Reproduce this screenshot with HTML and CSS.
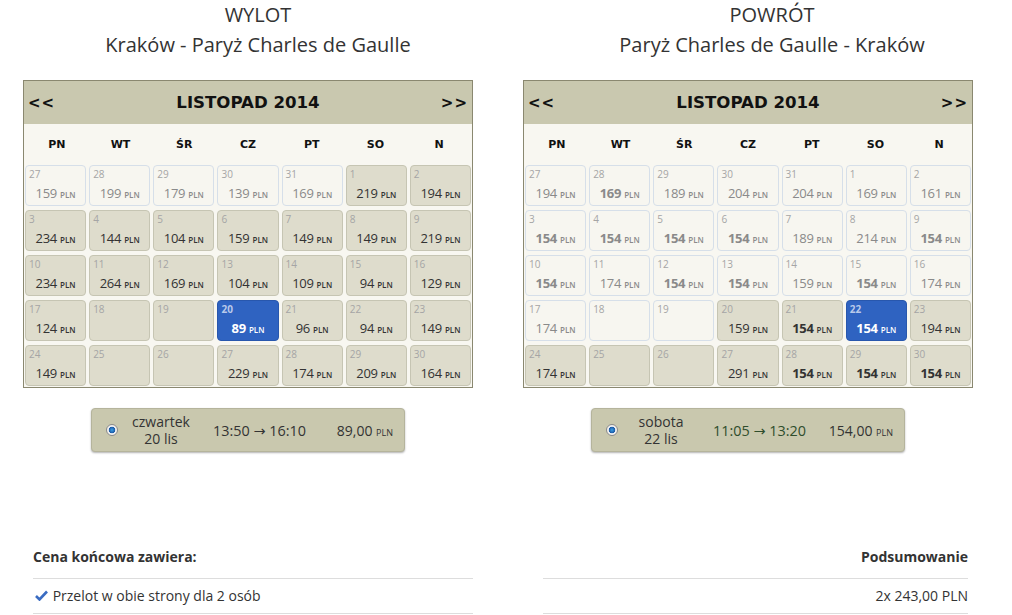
FILE: index.html
```html
<!DOCTYPE html>
<html>
<head>
    <title>Wybór lotu</title>
    <meta name="viewport" content="width=device-width, initial-scale=1.0">
    <link rel="stylesheet" href="styles.css">
</head>
<body>
    <div class="flights">
        <!-- Outbound -->
        <div class="leg leg-out">
            <div class="leg-title">
                WYLOT<br>
                Kraków - Paryż Charles de Gaulle
            </div>
            <div class="calendar">
                <div class="cal-head">
                    <span class="cal-nav">&lt;&lt;</span>
                    <span class="cal-month">LISTOPAD 2014</span>
                    <span class="cal-nav">&gt;&gt;</span>
                </div>
                <div class="cal-days">
                    <span>PN</span><span>WT</span><span>ŚR</span><span>CZ</span><span>PT</span><span>SO</span><span>N</span>
                </div>
                <div class="cal-grid" id="grid-out"></div>
            </div>
            <div class="choice">
                <span class="radio"></span>
                <span class="choice-day">czwartek<br>20 lis</span>
                <span class="choice-time">13:50 → 16:10</span>
                <span class="choice-price">89,00 <small>PLN</small></span>
            </div>
        </div>

        <!-- Return -->
        <div class="leg leg-back">
            <div class="leg-title">
                POWRÓT<br>
                Paryż Charles de Gaulle - Kraków
            </div>
            <div class="calendar">
                <div class="cal-head">
                    <span class="cal-nav">&lt;&lt;</span>
                    <span class="cal-month">LISTOPAD 2014</span>
                    <span class="cal-nav">&gt;&gt;</span>
                </div>
                <div class="cal-days">
                    <span>PN</span><span>WT</span><span>ŚR</span><span>CZ</span><span>PT</span><span>SO</span><span>N</span>
                </div>
                <div class="cal-grid" id="grid-back"></div>
            </div>
            <div class="choice">
                <span class="radio"></span>
                <span class="choice-day">sobota<br>22 lis</span>
                <span class="choice-time time-best">11:05 → 13:20</span>
                <span class="choice-price">154,00 <small>PLN</small></span>
            </div>
        </div>
    </div>

    <div class="summary">
        <div class="sum-col">
            <div class="sum-head">Cena końcowa zawiera:</div>
            <div class="sum-row">
                <svg class="check" width="13" height="11" viewBox="0 0 13 11"><path d="M1 6 L4.5 9.5 L12 1.5" fill="none" stroke="#3a6cc2" stroke-width="2.6"/></svg>
                Przelot w obie strony dla 2 osób
            </div>
        </div>
        <div class="sum-col sum-right">
            <div class="sum-head">Podsumowanie</div>
            <div class="sum-row">2x 243,00 PLN</div>
        </div>
    </div>

    <script>
        // [day, price, flags]  o = poza zakresem, b = najtańszy, s = wybrany
        const outbound = [
            [27,159,'o'],[28,199,'o'],[29,179,'o'],[30,139,'o'],[31,169,'o'],[1,219],[2,194],
            [3,234],[4,144],[5,104],[6,159],[7,149],[8,149],[9,219],
            [10,234],[11,264],[12,169],[13,104],[14,109],[15,94],[16,129],
            [17,124],[18],[19],[20,89,'s'],[21,96],[22,94],[23,149],
            [24,149],[25],[26],[27,229],[28,174],[29,209],[30,164]
        ];
        const inbound = [
            [27,194,'o'],[28,169,'ob'],[29,189,'o'],[30,204,'o'],[31,204,'o'],[1,169,'o'],[2,161,'o'],
            [3,154,'ob'],[4,154,'ob'],[5,154,'ob'],[6,154,'ob'],[7,189,'o'],[8,214,'o'],[9,154,'ob'],
            [10,154,'ob'],[11,174,'o'],[12,154,'ob'],[13,154,'ob'],[14,159,'o'],[15,154,'ob'],[16,174,'o'],
            [17,174,'o'],[18,null,'o'],[19,null,'o'],[20,159],[21,154,'b'],[22,154,'s'],[23,194],
            [24,174],[25],[26],[27,291],[28,154,'b'],[29,154,'b'],[30,154,'b']
        ];

        function fillGrid(id, days) {
            const grid = document.getElementById(id);
            days.forEach(([day, price, flags = '']) => {
                const cell = document.createElement('div');
                cell.className = 'cell';
                if (flags.includes('o')) cell.classList.add('off');
                if (flags.includes('b')) cell.classList.add('best');
                if (flags.includes('s')) cell.classList.add('selected');
                cell.innerHTML = '<span class="cell-day">' + day + '</span>' +
                    (price ? '<span class="cell-price">' + price + ' <small>PLN</small></span>' : '');
                grid.appendChild(cell);
            });
        }

        fillGrid('grid-out', outbound);
        fillGrid('grid-back', inbound);
    </script>
</body>
</html>
```

FILE: styles.css
```css
body {
    margin: 0;
    background: #fff;
    color: #333;
    font-family: 'Open Sans', 'DejaVu Sans', sans-serif;
}
.flights {
    display: flex;
    gap: 50px;
    padding-left: 23px;
}
.leg {
    width: 450px;
    display: flex;
    flex-direction: column;
    align-items: center;
}
.leg-title {
    font-size: 20px;
    line-height: 30px;
    text-align: center;
    padding-left: 20px;
    margin-bottom: 20px;
}
.leg-back .leg-title {
    padding-left: 48px;
}
/* Month calendar */
.calendar {
    width: 448px;
    border: 1px solid #8a8870;
    background: #f8f7f1;
}
.cal-head {
    height: 43px;
    background: #c9c8af;
    display: flex;
    align-items: center;
    justify-content: space-between;
    padding: 0 4px;
    font-family: 'DejaVu Sans', sans-serif;
    font-weight: bold;
    color: #111;
}
.cal-nav {
    font-size: 15px;
    letter-spacing: 1px;
}
.cal-month {
    font-size: 16.6px;
}
.cal-days {
    height: 40px;
    display: grid;
    grid-template-columns: repeat(7, 1fr);
    align-items: center;
    text-align: center;
    font-family: 'DejaVu Sans', sans-serif;
    font-weight: bold;
    font-size: 11px;
    color: #111;
    padding: 0 1px;
}
.cal-grid {
    display: grid;
    grid-template-columns: repeat(7, 1fr);
    grid-auto-rows: 41px;
    gap: 4px 3px;
    padding: 1px;
}
.cell {
    position: relative;
    border: 1px solid #c6c5b3;
    border-radius: 4px;
    background: #dedccc;
    color: #333;
}
.cell.off {
    background: #f7f6f0;
    border-color: #d6dfe9;
    color: #8a8a8a;
}
.cell-day {
    position: absolute;
    left: 3px;
    top: 1px;
    font-size: 10px;
    color: #a5a5a5;
}
.cell-price {
    position: absolute;
    left: 0;
    right: 0;
    top: 18px;
    text-align: center;
    font-size: 13px;
    letter-spacing: -0.3px;
}
.cell-price small {
    font-size: 8px;
    font-weight: 600;
    letter-spacing: 0;
}
.cell.best .cell-price {
    font-weight: bold;
}
.cell.selected {
    background: #2f63c1;
    border-color: #2857ad;
    color: #fff;
}
.cell.selected .cell-day {
    color: #b9c9ea;
    font-weight: bold;
}
.cell.selected .cell-price {
    font-weight: bold;
}
/* Chosen flight */
.choice {
    margin-top: 20px;
    width: 312px;
    height: 42px;
    display: flex;
    align-items: center;
    background: #c9c8ae;
    border: 1px solid #b5b49c;
    border-radius: 4px;
    box-shadow: 0 1px 2px rgba(0, 0, 0, 0.3);
    font-size: 14px;
    color: #333;
}
.radio {
    width: 10px;
    height: 10px;
    margin-left: 14px;
    border-radius: 50%;
    border: 1px solid #8a8a8a;
    background: radial-gradient(circle, #3aa0e6 0, #1c5aa6 3px, #f0f0f0 3.6px);
}
.choice-day {
    width: 66px;
    margin-left: 10px;
    text-align: center;
    line-height: 17px;
}
.choice-time {
    margin-left: 19px;
    font-size: 14.4px;
}
.time-best {
    color: #2f4d2c;
}
.choice-price {
    margin-left: auto;
    margin-right: 11px;
}
.choice-price small {
    font-size: 9px;
}
/* Price summary */
.summary {
    display: flex;
    gap: 70px;
    padding-left: 33px;
    margin-top: 91px;
    font-size: 14px;
}
.sum-col {
    width: 440px;
}
.sum-right {
    width: 425px;
    text-align: right;
}
.sum-head {
    font-weight: bold;
    line-height: 20px;
    padding: 4px 0 11px;
    border-bottom: 1px solid #ddd;
}
.sum-row {
    line-height: 20px;
    padding: 7px 0;
    border-bottom: 1px solid #ddd;
}
.check {
    margin: 0 1px 0 2px;
}
```
